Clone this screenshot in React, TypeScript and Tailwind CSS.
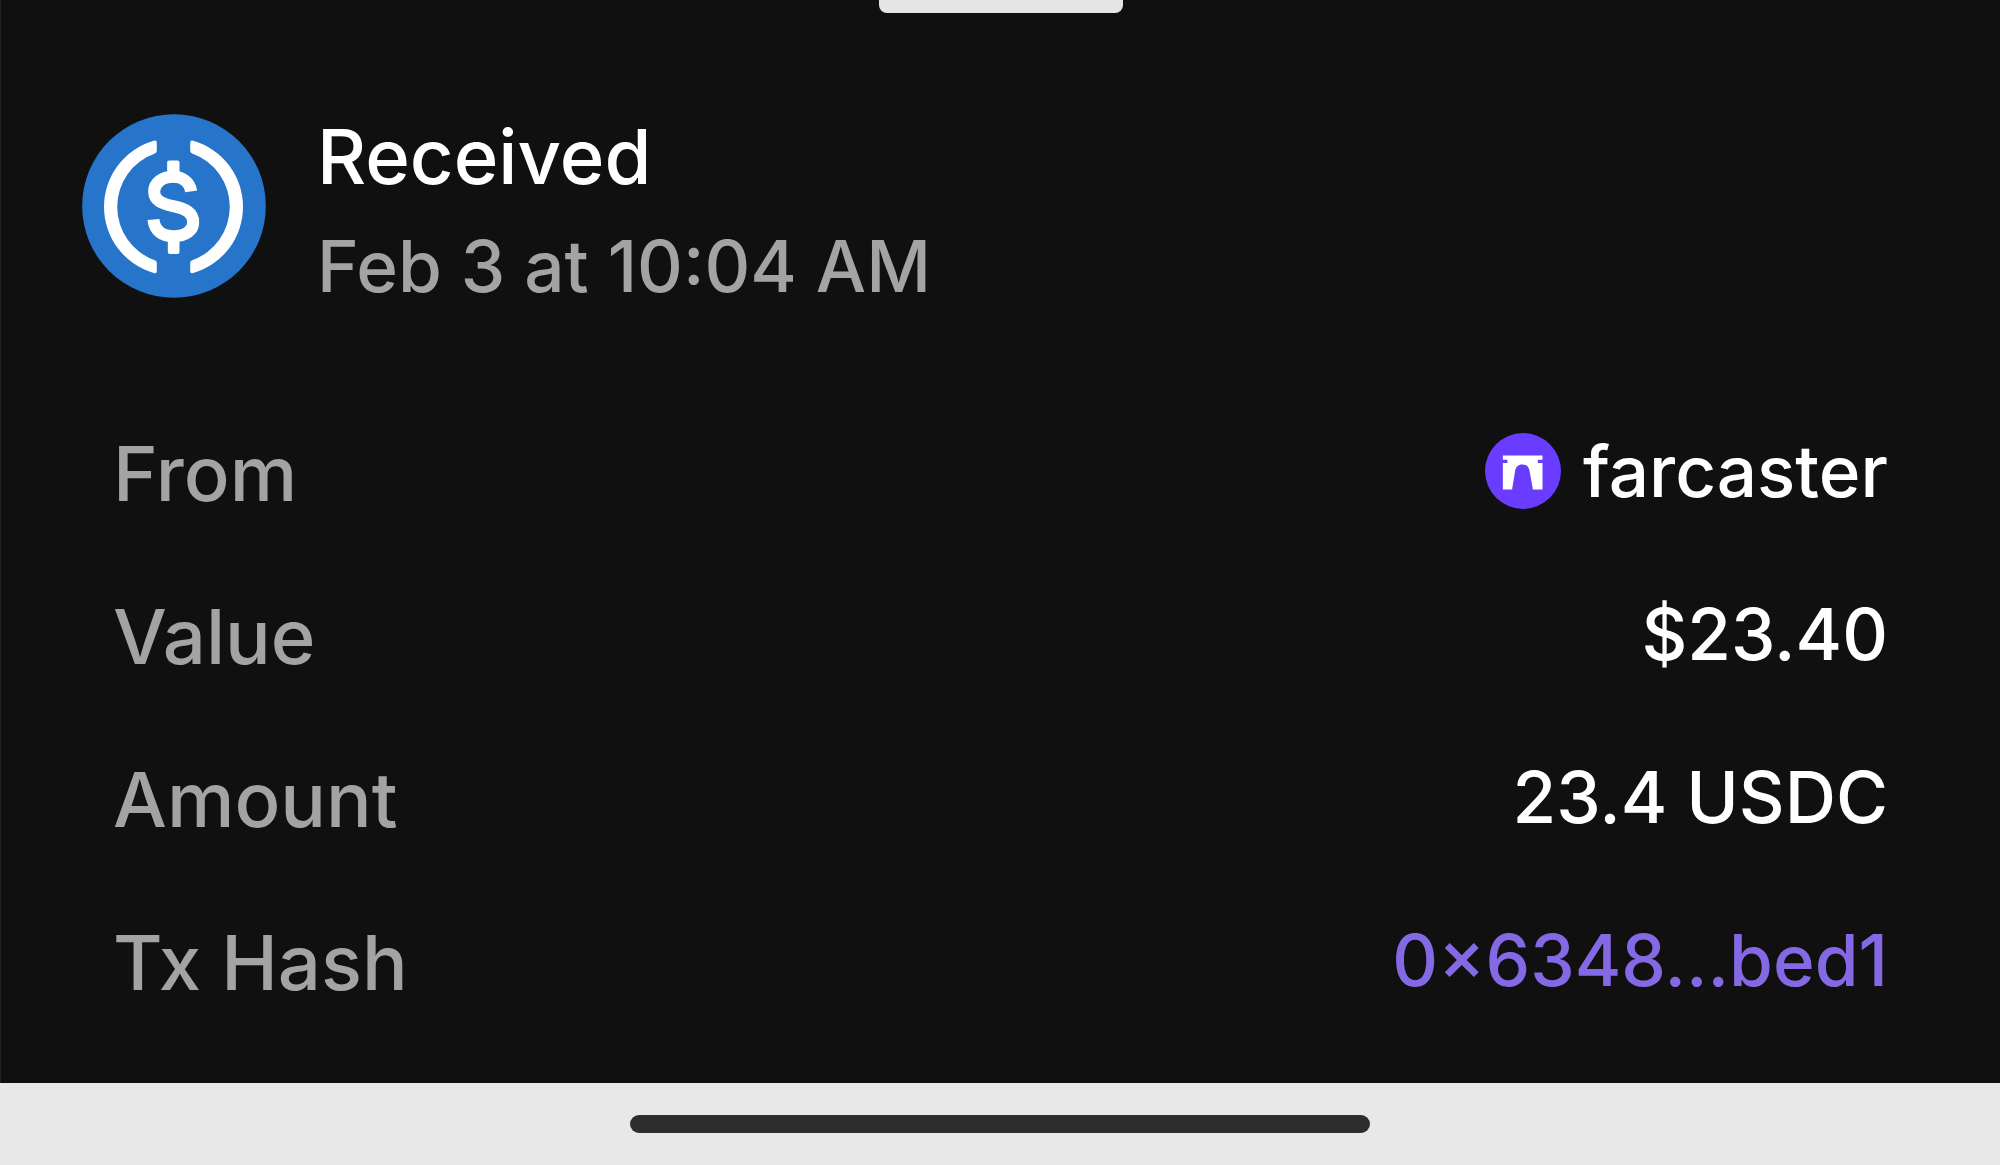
import type { ReactNode } from 'react'

function UsdcIcon() {
  return (
    <svg viewBox="65 74 551 551" className="mt-2 size-46 shrink-0" role="img" aria-label="USDC">
      <circle cx="340.5" cy="349.5" r="275" fill="#2775ca" />
      <g fill="#fff">
        <path d="M289 160Q289 151 280 154A206 206 0 0 0 280 550Q289 553 289 544V520Q289 514 283 512A170 170 0 0 1 283 192Q289 190 289 184Z" />
        <path d="M389 160Q389 151 398 154A206 206 0 0 1 398 550Q389 553 389 544V520Q389 514 395 512A170 170 0 0 0 395 192Q389 190 389 184Z" />
        <rect x="320" y="213" width="37" height="54" rx="6" />
        <rect x="322" y="438" width="35" height="55" rx="6" />
      </g>
      <path
        d="M392 306C388 278 366 262 338 262C306 262 281 280 281 306C281 332 302 342 338 350C376 358 398 370 398 398C398 424 374 440 340 440C306 440 282 424 279 390"
        fill="none"
        stroke="#fff"
        strokeWidth="36"
      />
    </svg>
  )
}

function FarcasterIcon() {
  return (
    <svg viewBox="22 12 230 230" className="size-19 shrink-0" aria-hidden="true">
      <circle cx="137" cy="127" r="115" fill="#6a3cff" />
      <path
        d="M76 80H196V93H182V103H196V183H167L157 128C155 114 148 107 135 107C122 107 115 114 113 128L104 183H76V103H90V93H76Z"
        fill="#fff"
      />
    </svg>
  )
}

interface DetailRowProps {
  label: string
  children: ReactNode
}

function DetailRow({ label, children }: DetailRowProps) {
  return (
    <div className="flex items-start justify-between">
      <dt className="text-[76px] leading-[99px] text-[#a3a3a3]">{label}</dt>
      <dd className="flex items-center gap-5.5 text-[71px] leading-[94px] text-white">{children}</dd>
    </div>
  )
}

export default function App() {
  return (
    <div className="flex min-h-screen flex-col bg-[#e8e8e8] font-['Inter',sans-serif] font-medium">
      <main className="flex flex-1 flex-col border-l border-[#1a2423] bg-[#101010]">
        <div className="mx-auto h-[13px] w-61 rounded-b-lg bg-[#e5e5e5]" />

        <header className="mt-[93px] flex items-start gap-[51px] px-[81px]">
          <UsdcIcon />
          <div className="flex flex-col gap-2.5">
            <h1 className="text-[76px] leading-[100px] text-white">Received</h1>
            <p className="text-[71px] leading-[100px] text-[#a3a3a3]">Feb 3 at 10:04 AM</p>
          </div>
        </header>

        <dl className="mt-[108px] flex flex-col gap-16 px-28">
          <DetailRow label="From">
            <FarcasterIcon />
            farcaster
          </DetailRow>
          <DetailRow label="Value">$23.40</DetailRow>
          <DetailRow label="Amount">23.4 USDC</DetailRow>
          <DetailRow label="Tx Hash">
            <a href="#tx" className="text-[#8569e4]">0×6348...bed1</a>
          </DetailRow>
        </dl>
      </main>

      <footer className="flex h-[82px] items-start justify-center pt-8">
        <div className="h-[18px] w-[37%] rounded-full bg-[#2d2d2d]" />
      </footer>
    </div>
  )
}
